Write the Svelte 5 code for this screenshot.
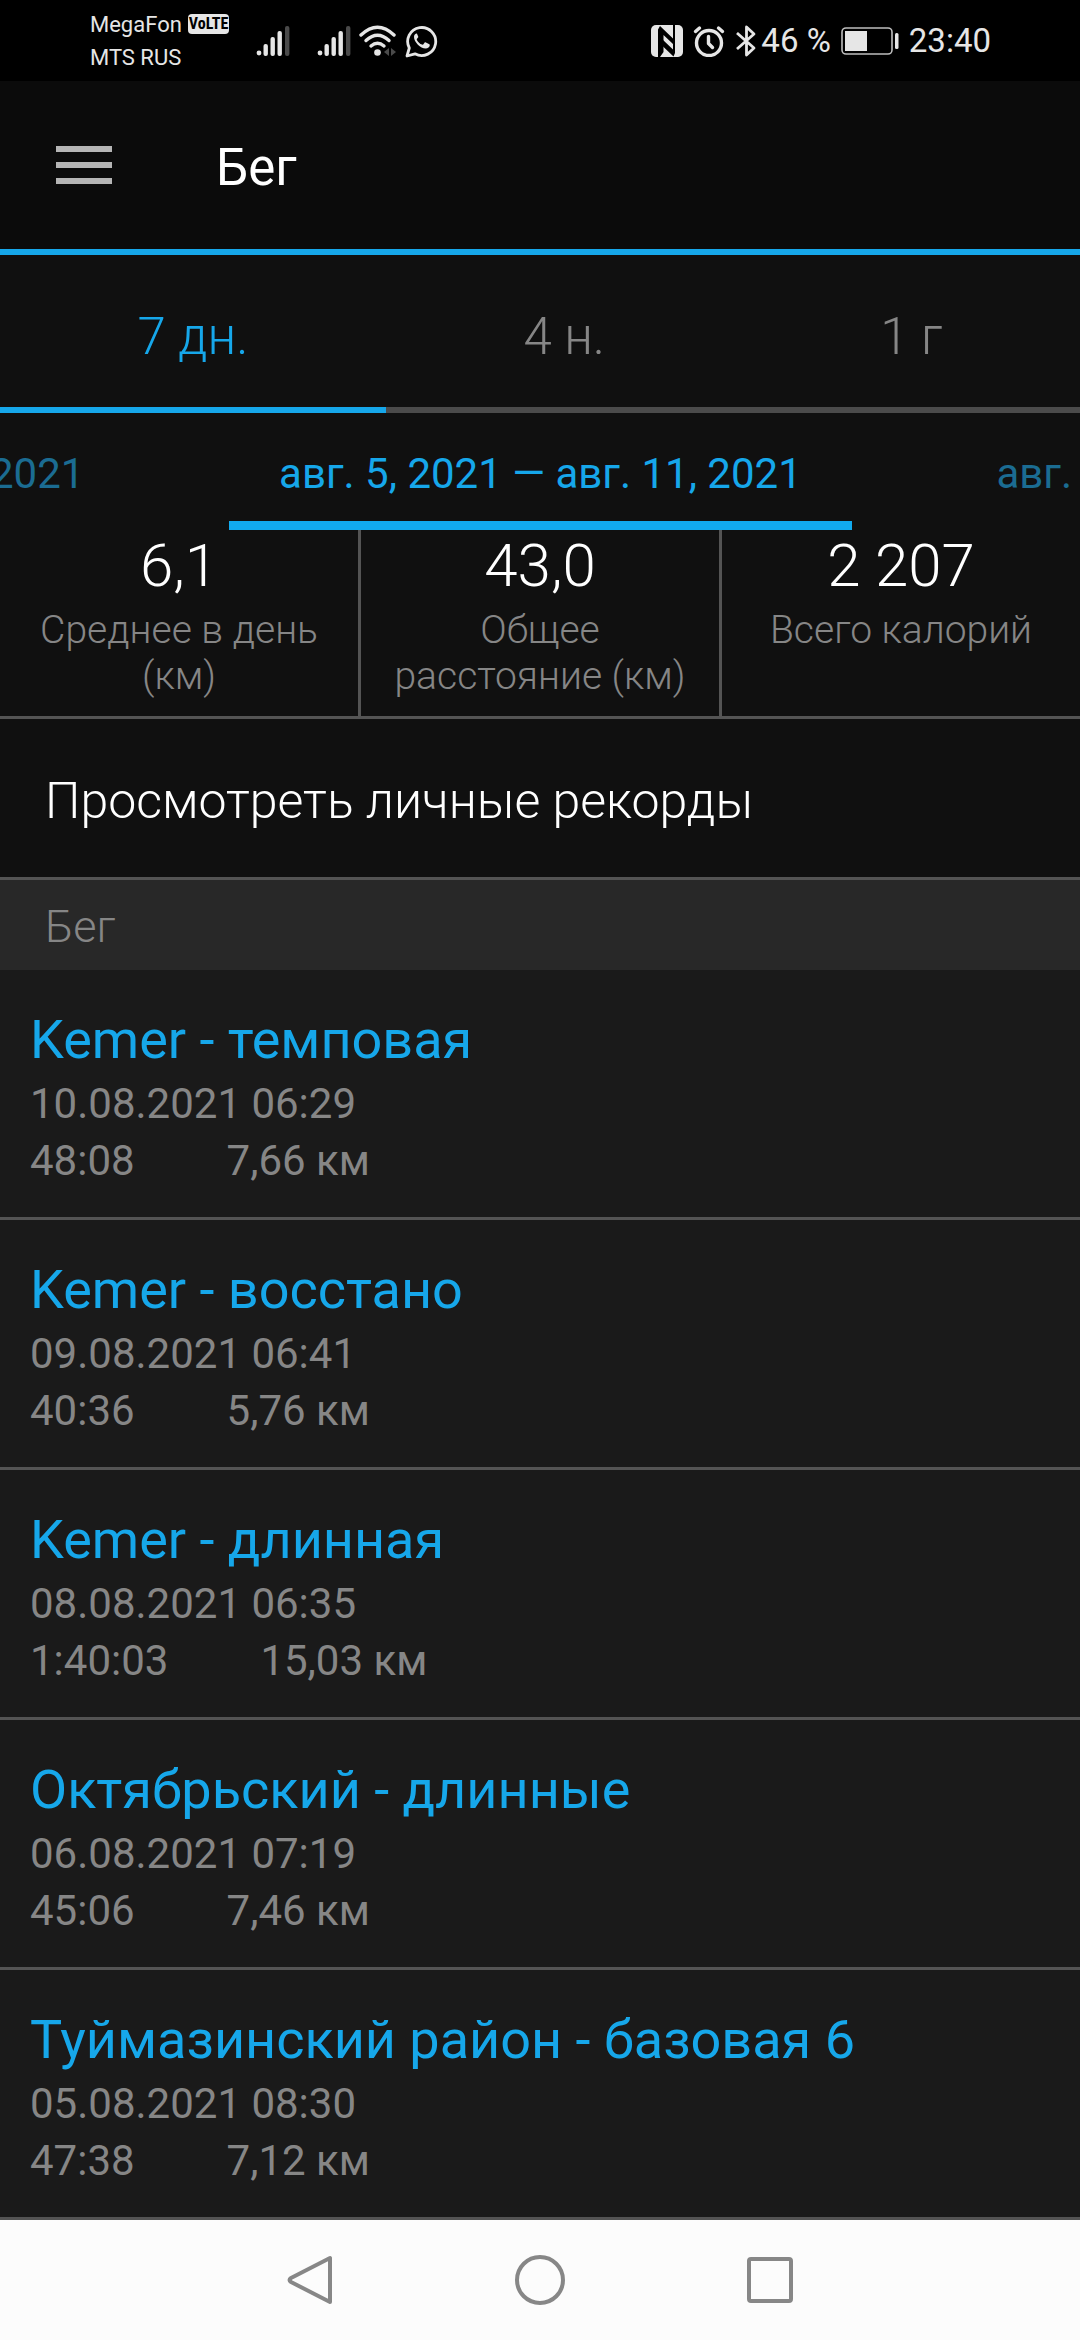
<script lang="ts">
  type Activity = {
    name: string;
    date: string;
    duration: string;
    distance: string;
  };

  const ranges = ["7 дн.", "4 н.", "1 г"];

  const stats = [
    { value: "6,1", label: "Среднее в день (км)" },
    { value: "43,0", label: "Общее расстояние (км)" },
    { value: "2 207", label: "Всего калорий" },
  ];

  const activities: Activity[] = [
    { name: "Kemer - темповая", date: "10.08.2021 06:29", duration: "48:08", distance: "7,66 км" },
    { name: "Kemer - восстано", date: "09.08.2021 06:41", duration: "40:36", distance: "5,76 км" },
    { name: "Kemer - длинная", date: "08.08.2021 06:35", duration: "1:40:03", distance: "15,03 км" },
    { name: "Октябрьский - длинные", date: "06.08.2021 07:19", duration: "45:06", distance: "7,46 км" },
    { name: "Туймазинский район - базовая 6", date: "05.08.2021 08:30", duration: "47:38", distance: "7,12 км" },
  ];

  let activeRange = $state(ranges[0]);
</script>

{#snippet signal()}
  <svg class="signal" width="34" height="32" viewBox="0 0 34 32" aria-hidden="true">
    <circle cx="3" cy="28" r="2.4" />
    <rect x="7.5" y="19" width="4.4" height="12" rx="2" />
    <rect x="14.5" y="12" width="4.4" height="19" rx="2" />
    <rect x="21.5" y="6" width="4.4" height="25" rx="2" />
    <rect x="29" y="1" width="4.4" height="30" rx="2" fill="#4a4a4a" />
  </svg>
{/snippet}

<div class="screen">
  <div class="status-bar">
    <div class="carriers">
      <span class="carrier">MegaFon <span class="volte">VoLTE</span></span>
      <span class="carrier">MTS RUS</span>
    </div>
    <div class="network">
      {@render signal()}
      {@render signal()}
      <svg class="wifi" width="38" height="32" viewBox="0 0 38 32" aria-hidden="true">
        <g fill="none" stroke="#e6e6e6" stroke-width="3.4" stroke-linecap="round">
          <path d="M2 10 Q18.5 -5.5 35 10" />
          <path d="M7 15.5 Q18.5 5 30 15.5" />
          <path d="M12 21 Q18.5 15.5 25 21" />
        </g>
        <circle cx="18.5" cy="27.5" r="3.3" />
        <path d="M30 23v8l-5-4zM32 23v8l5-4z" fill="#4a4a4a" />
      </svg>
      <svg class="whatsapp" width="34" height="34" viewBox="0 0 34 34" aria-hidden="true">
        <path
          d="M2 32 L4.3 24 A14 14 0 1 1 10 29.8 Z"
          fill="none"
          stroke="#e6e6e6"
          stroke-width="2.8"
          stroke-linejoin="round"
        />
        <path
          d="M11.8 9.5c-1.5 0-2.8 1.6-2.8 3.4 0 5 6.5 11.6 11.7 11.6 2.1 0 4.1-1.3 4.1-3.2 0-.8-.2-1-.9-1.4l-3-1.5c-.7-.3-1-.2-1.4.3l-1.3 1.7c-.3.4-.7.4-1.2.2-2.2-.9-4-2.6-5.1-4.7-.3-.5-.2-.8.1-1.1l1-1.2c.3-.4.4-.7.2-1.2l-1.1-2.5c-.1-.3-.2-.4-.3-.4z"
        />
      </svg>
    </div>
    <div class="system">
      <svg class="nfc" width="32" height="32" viewBox="0 0 32 32" aria-hidden="true">
        <rect width="32" height="32" rx="5" />
        <path d="M7 4.5 9 1l13 12.5v5.5L12.5 10v17L9 32H7z" fill="#000" />
        <path d="M22 0h2v28l-1.5 3.5L11.5 21v-6.5l10.5 10z" fill="#000" />
      </svg>
      <svg class="alarm" width="32" height="32" viewBox="0 0 32 32" aria-hidden="true">
        <g fill="none" stroke="#e6e6e6" stroke-width="3.4" stroke-linecap="round" stroke-linejoin="round">
          <circle cx="16" cy="18" r="12.5" />
          <path d="M15.5 11.5v7l4 4" />
          <path d="M2.5 6.5l4-3.5M29.5 6.5l-4-3.5" />
        </g>
      </svg>
      <svg class="bluetooth" width="22" height="32" viewBox="0 0 22 32" aria-hidden="true">
        <path
          d="M2 8 L19 23 L11.5 30 V2 L19 9 L2 24"
          fill="none"
          stroke="#e6e6e6"
          stroke-width="2.8"
          stroke-linejoin="round"
        />
      </svg>
      <span>46 %</span>
      <svg class="battery" width="58" height="28" viewBox="0 0 58 28" aria-hidden="true">
        <rect x="1" y="1" width="50" height="26" rx="4" fill="none" stroke="#bdbdbd" stroke-width="1.6" />
        <rect x="4" y="4" width="22" height="20" />
        <rect x="54" y="6" width="3.5" height="16" rx="1.5" />
      </svg>
      <span>23:40</span>
    </div>
  </div>

  <header class="app-bar">
    <button class="menu" aria-label="Меню">
      <span></span>
      <span></span>
      <span></span>
    </button>
    <h1>Бег</h1>
  </header>

  <div class="ranges" role="tablist">
    {#each ranges as range (range)}
      <button
        class="range"
        class:active={activeRange === range}
        role="tab"
        aria-selected={activeRange === range}
        onclick={() => (activeRange = range)}
      >
        {range}
      </button>
    {/each}
  </div>

  <div class="periods">
    <button class="period previous">2021</button>
    <button class="period current">авг. 5, 2021 — авг. 11, 2021</button>
    <button class="period next">авг.</button>
  </div>

  <div class="stats">
    {#each stats as stat (stat.label)}
      <div class="stat">
        <span class="stat-value">{stat.value}</span>
        <span class="stat-label">{stat.label}</span>
      </div>
    {/each}
  </div>

  <a class="records" href="#records">Просмотреть личные рекорды</a>

  <h2>Бег</h2>

  <ul class="activities">
    {#each activities as activity (activity.date)}
      <li>
        <a class="activity" href="#activity">
          <span class="activity-name">{activity.name}</span>
          <span class="activity-line">{activity.date}</span>
          <span class="activity-line">
            <span>{activity.duration}</span>
            <span>{activity.distance}</span>
          </span>
        </a>
      </li>
    {/each}
  </ul>

  <nav class="system-nav">
    <button aria-label="Назад">
      <svg width="52" height="52" viewBox="0 0 52 52">
        <path d="M46 4 V48 L7 28 Q4 26 7 24 Z" />
      </svg>
    </button>
    <button aria-label="Домой">
      <svg width="52" height="52" viewBox="0 0 52 52">
        <circle cx="26" cy="26" r="23" />
      </svg>
    </button>
    <button aria-label="Недавние">
      <svg width="52" height="52" viewBox="0 0 52 52">
        <rect x="5" y="5" width="42" height="42" rx="2" />
      </svg>
    </button>
  </nav>
</div>

<style>
  :global(body) {
    background: #101010;
  }

  .screen {
    --blue: #16a7ea;
    --muted: #868686;
    --divider: #545454;
    background: #101010;
    color: #fff;
    font-family: Roboto, "Noto Sans", sans-serif;
    overflow: hidden;
  }

  button {
    padding: 0;
    border: 0;
    background: none;
    color: inherit;
    font: inherit;
    cursor: pointer;
  }

  a {
    color: inherit;
    text-decoration: none;
  }

  svg {
    display: block;
  }

  .status-bar {
    display: flex;
    align-items: center;
    height: 81px;
    padding: 0 89px 0 90px;
    background: #000;
    color: #e6e6e6;
    fill: #e6e6e6;
  }

  .carriers {
    display: flex;
    flex-direction: column;
    font-size: 22px;
    line-height: 33px;
  }

  .carrier {
    display: flex;
    align-items: center;
    gap: 6px;
  }

  .volte {
    padding: 0 1px;
    border-radius: 4px;
    background: #e6e6e6;
    color: #000;
    font-family: "Roboto Condensed", Roboto, sans-serif;
    font-size: 16px;
    font-weight: 700;
    line-height: 20px;
  }

  .network {
    display: flex;
    align-items: center;
    margin-left: 27px;
  }

  .signal {
    margin-right: 27px;
  }

  .wifi {
    margin-left: -19px;
    margin-right: 8px;
  }

  .system {
    display: flex;
    align-items: center;
    margin-left: auto;
    font-size: 33px;
    line-height: 40px;
  }

  .nfc,
  .alarm {
    margin-right: 10px;
  }

  .bluetooth {
    margin-right: 4px;
  }

  .battery {
    margin: 0 10px;
  }

  .app-bar {
    display: flex;
    align-items: center;
    gap: 104px;
    height: 168px;
    padding-left: 56px;
    border-bottom: 6px solid var(--blue);
    background: #0b0b0b;
  }

  .menu {
    display: flex;
    flex-direction: column;
    gap: 10px;
    width: 56px;
  }

  .menu span {
    height: 6px;
    background: #b5b5b5;
  }

  h1 {
    margin: 0;
    padding-top: 5px;
    font-size: 51px;
    font-weight: 400;
    line-height: 60px;
  }

  .ranges {
    display: flex;
  }

  .range {
    flex: 1 1 auto;
    padding: 52px 0 40px;
    border-bottom: 6px solid #4b4b4b;
    color: var(--muted);
    font-size: 51px;
    font-weight: 300;
    line-height: 60px;
  }

  .range.active {
    border-color: var(--blue);
    color: var(--blue);
  }

  .periods {
    display: flex;
    justify-content: space-between;
    white-space: nowrap;
  }

  .period {
    padding: 32px 0 18px;
    border-bottom: 9px solid transparent;
    color: #1b6c92;
    font-size: 42px;
    line-height: 58px;
  }

  .period.current {
    padding-left: 50px;
    padding-right: 50px;
    border-color: #11aaef;
    color: var(--blue);
  }

  /* neighbouring periods run past the edge of the strip */
  .previous {
    margin-left: -10px;
  }

  .next {
    margin-right: 8px;
  }

  .stats {
    display: grid;
    grid-template-columns: repeat(3, 1fr);
    column-gap: 3px;
    background: var(--divider);
    border-bottom: 3px solid var(--divider);
  }

  .stat {
    display: flex;
    flex-direction: column;
    gap: 5px;
    padding: 0 32px 17px;
    background: #101010;
    text-align: center;
  }

  .stat-value {
    font-size: 60px;
    font-weight: 300;
    line-height: 72px;
  }

  .stat-label {
    color: var(--muted);
    font-size: 39px;
    font-weight: 300;
    line-height: 46px;
  }

  .records {
    display: block;
    padding: 52px 45px 46px;
    border-bottom: 3px solid var(--divider);
    font-size: 50px;
    font-weight: 300;
    line-height: 60px;
  }

  h2 {
    margin: 0;
    padding: 20px 45px 16px;
    background: #282828;
    color: var(--muted);
    font-size: 45px;
    font-weight: 300;
    line-height: 54px;
  }

  .activities {
    margin: 0;
    padding: 0;
    list-style: none;
    background: #1a1a1a;
  }

  .activity {
    display: flex;
    flex-direction: column;
    padding: 35px 30px 28px;
    border-bottom: 3px solid var(--divider);
  }

  .activity-name {
    color: var(--blue);
    font-size: 54px;
    line-height: 70px;
  }

  .activity-line {
    display: flex;
    gap: 92px;
    color: var(--muted);
    font-size: 42px;
    line-height: 57px;
  }

  .system-nav {
    display: flex;
    justify-content: center;
    gap: 178px;
    padding: 34px 0;
    background: #fcfcfc;
  }

  .system-nav svg {
    fill: none;
    stroke: #878787;
    stroke-width: 4;
    stroke-linejoin: round;
  }
</style>
